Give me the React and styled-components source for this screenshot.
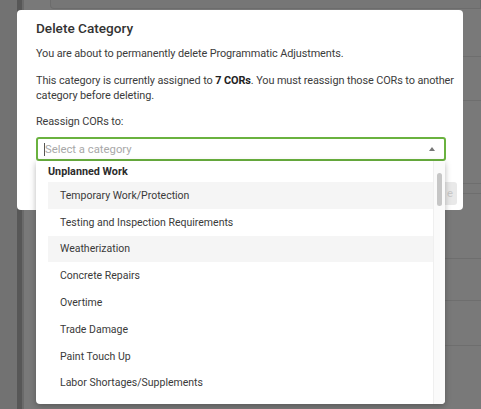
import React from "react";
import styled, { createGlobalStyle } from "styled-components";

const Global = createGlobalStyle`
  html, body { margin: 0; padding: 0; }
  body {
    width: 481px; height: 409px; overflow: hidden;
    background: #747474;
    font-family: Roboto, "Liberation Sans", Arial, sans-serif;
  }
`;

const Page = styled.div`
  position: relative;
  width: 481px;
  height: 409px;
  display: flex;
  overflow: hidden;
`;

const SideStrip = styled.div`
  width: 17px;
  background: #727272;
  flex: none;
`;

const SideBorder = styled.div`
  width: 5px;
  background: #575757;
  flex: none;
`;

const Main = styled.div`
  flex: 1;
  display: flex;
  flex-direction: column;
  background: #797979;
  border-left: 2px solid #6a6a6a;
  padding: 0 0 0 26px;
`;

const TopPanel = styled.div`
  height: 8px;
  border: 1px solid #6c6c6c;
  border-top: none;
  border-radius: 0 0 0 4px;
  background: #767676;
`;

const RowLine = styled.div`
  height: ${(p) => p.h}px;
  border-bottom: 1px solid #6e6e6e;
`;

const Modal = styled.div`
  position: absolute;
  left: 17px;
  top: 10px;
  width: 446px;
  height: 200px;
  box-sizing: border-box;
  background: #fff;
  border-radius: 4px;
  padding: 9px 17px 0 19px;
  display: flex;
  flex-direction: column;
  color: #3a3a3a;
`;

const Title = styled.h2`
  margin: 0 0 8.5px;
  font-size: 13.6px;
  font-weight: 500;
  color: #333;
  line-height: 18px;
`;

const Para = styled.p`
  margin: 0 0 12px 0;
  width: 424px;
  font-size: 10.9px;
  letter-spacing: -0.1px;
  line-height: 15px;
  color: #3c3c3c;
  b { font-weight: 700; color: #222; }
`;

const Label = styled(Para)`
  margin: -1px 0 8.5px;
`;

const SelectBox = styled.div`
  height: 24px;
  box-sizing: border-box;
  border: 2px solid #6ab23f;
  border-radius: 3px;
  display: flex;
  align-items: center;
  padding: 0 9px 0 6px;
  font-size: 11.3px;
  color: #a8a8a8;
`;

const Cursor = styled.span`
  width: 1px;
  height: 13px;
  background: #555;
`;

const Placeholder = styled.span`
  flex: 1;
`;

const Caret = styled.span`
  width: 0;
  height: 0;
  border-left: 3.5px solid transparent;
  border-right: 3.5px solid transparent;
  border-bottom: 4px solid #777;
`;

const Footer = styled.div`
  display: flex;
  justify-content: flex-end;
  margin-top: 21px;
  margin-right: -11px;
`;

const DeleteBtn = styled.div`
  width: 60px;
  height: 23px;
  border-radius: 3px;
  background: #e9e9e9;
  color: #c9c9c9;
  font-size: 11.3px;
  display: flex;
  align-items: center;
  justify-content: flex-end;
  padding-right: 4px;
`;

const Dropdown = styled.div`
  position: absolute;
  left: 36px;
  top: 161px;
  width: 409px;
  height: 243px;
  background: #fff;
  border-radius: 0 0 4px 4px;
  box-shadow: 0 2px 6px rgba(0, 0, 0, 0.28);
  display: flex;
  overflow: hidden;
`;

const List = styled.div`
  flex: 1;
  padding-left: 12px;
`;

const GroupHeader = styled.div`
  height: 21px;
  display: flex;
  align-items: center;
  font-size: 10.8px;
  font-weight: 700;
  color: #2c2c2c;
`;

const Item = styled.div`
  height: 26.8px;
  display: flex;
  align-items: center;
  padding-left: 12px;
  font-size: 10.5px;
  color: #3a3a3a;
  background: ${(p) => (p.shaded ? "#f5f5f5" : "transparent")};
`;

const Track = styled.div`
  width: 12px;
  background: #fafafa;
  border-left: 1px solid #efefef;
  padding-top: 12px;
  box-sizing: border-box;
  display: flex;
  justify-content: center;
`;

const Thumb = styled.div`
  width: 5px;
  height: 33px;
  border-radius: 3px;
  background: #c6c6c6;
`;

const items = [
  "Temporary Work/Protection",
  "Testing and Inspection Requirements",
  "Weatherization",
  "Concrete Repairs",
  "Overtime",
  "Trade Damage",
  "Paint Touch Up",
  "Labor Shortages/Supplements",
];

export default function App() {
  return (
    <>
      <Global />
      <Page>
        <SideStrip />
        <SideBorder />
        <Main>
          <TopPanel />
          <RowLine h={47} />
          <RowLine h={43} />
          <RowLine h={82} />
          <RowLine h={9} />
          <RowLine h={64} />
          <RowLine h={41} />
          <RowLine h={44} />
        </Main>
        <Modal>
          <Title>Delete Category</Title>
          <Para>You are about to permanently delete Programmatic Adjustments.</Para>
          <Para>
            This category is currently assigned to <b>7 CORs</b>. You must reassign those CORs to another
            category before deleting.
          </Para>
          <Label>Reassign CORs to:</Label>
          <SelectBox>
            <Cursor />
            <Placeholder>Select a category</Placeholder>
            <Caret />
          </SelectBox>
          <Footer>
            <DeleteBtn>e</DeleteBtn>
          </Footer>
        </Modal>
        <Dropdown>
          <List>
            <GroupHeader>Unplanned Work</GroupHeader>
            {items.map((t, i) => (
              <Item key={t} shaded={i === 0 || i === 2}>
                {t}
              </Item>
            ))}
          </List>
          <Track>
            <Thumb />
          </Track>
        </Dropdown>
      </Page>
    </>
  );
}
